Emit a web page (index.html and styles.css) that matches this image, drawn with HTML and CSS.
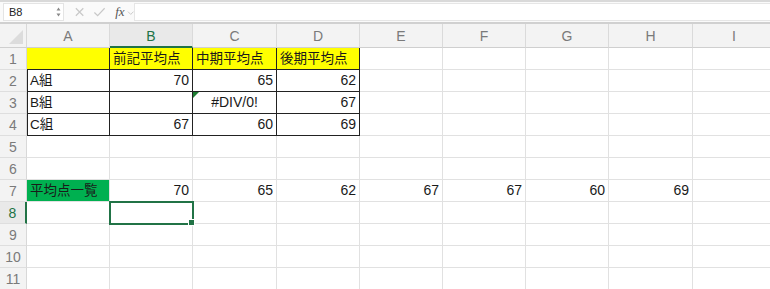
FILE: index.html
```html
<!DOCTYPE html>
<html lang="ja">
<head>
<meta charset="utf-8">
<link rel="stylesheet" href="styles.css">
</head>
<body>
<div class="toolbar">
  <div class="namebox"><span class="ref">B8</span><span class="spin"><svg width="5" height="10" viewBox="0 0 5 10"><path d="M2.5 0.5 L4.5 3.5 L0.5 3.5 Z M2.5 9.5 L4.5 6.5 L0.5 6.5 Z" fill="#8a8a8a"/></svg></span></div>
  <div class="fbtns">
    <svg class="ic" width="12" height="12" viewBox="0 0 12 12"><path d="M2 2 L10 10 M10 2 L2 10" stroke="#c8c8c8" stroke-width="1.3" fill="none"/></svg>
    <svg class="ic" width="14" height="12" viewBox="0 0 14 12"><path d="M1.5 6.5 L5 10 L12.5 2" stroke="#c8c8c8" stroke-width="1.3" fill="none"/></svg>
    <span class="fx">fx</span>
    <svg class="chev" width="8" height="6" viewBox="0 0 8 6"><path d="M1 1.5 L4 4.5 L7 1.5" stroke="#c8c8c8" stroke-width="1" fill="none"/></svg>
  </div>
  <div class="formula"></div>
</div>
<div class="sheet">
  <div class="corner"><span class="tri"></span></div>
  <div class="ch">A</div><div class="ch sel">B</div><div class="ch">C</div><div class="ch">D</div><div class="ch">E</div><div class="ch">F</div><div class="ch">G</div><div class="ch">H</div><div class="ch">I</div>

  <div class="rh">1</div>
  <div class="c y bk-r bk-b"></div><div class="c y bk-r bk-b">前記平均点</div><div class="c y bk-r bk-b">中期平均点</div><div class="c y bk-r bk-b">後期平均点</div><div class="c"></div><div class="c"></div><div class="c"></div><div class="c"></div><div class="c"></div>

  <div class="rh">2</div>
  <div class="c bk-l bk-r bk-b">A組</div><div class="c n bk-r bk-b">70</div><div class="c n bk-r bk-b">65</div><div class="c n bk-r bk-b">62</div><div class="c"></div><div class="c"></div><div class="c"></div><div class="c"></div><div class="c"></div>

  <div class="rh">3</div>
  <div class="c bk-l bk-r bk-b">B組</div><div class="c n bk-r bk-b"></div><div class="c ctr bk-r bk-b err">#DIV/0!</div><div class="c n bk-r bk-b">67</div><div class="c"></div><div class="c"></div><div class="c"></div><div class="c"></div><div class="c"></div>

  <div class="rh">4</div>
  <div class="c bk-l bk-r bk-b">C組</div><div class="c n bk-r bk-b">67</div><div class="c n bk-r bk-b">60</div><div class="c n bk-r bk-b">69</div><div class="c"></div><div class="c"></div><div class="c"></div><div class="c"></div><div class="c"></div>

  <div class="rh">5</div>
  <div class="c"></div><div class="c"></div><div class="c"></div><div class="c"></div><div class="c"></div><div class="c"></div><div class="c"></div><div class="c"></div><div class="c"></div>

  <div class="rh">6</div>
  <div class="c"></div><div class="c"></div><div class="c"></div><div class="c"></div><div class="c"></div><div class="c"></div><div class="c"></div><div class="c"></div><div class="c"></div>

  <div class="rh">7</div>
  <div class="c g">平均点一覧</div><div class="c n">70</div><div class="c n">65</div><div class="c n">62</div><div class="c n">67</div><div class="c n">67</div><div class="c n">60</div><div class="c n">69</div><div class="c"></div>

  <div class="rh sel">8</div>
  <div class="c"></div><div class="c active"></div><div class="c"></div><div class="c"></div><div class="c"></div><div class="c"></div><div class="c"></div><div class="c"></div><div class="c"></div>

  <div class="rh">9</div>
  <div class="c"></div><div class="c"></div><div class="c"></div><div class="c"></div><div class="c"></div><div class="c"></div><div class="c"></div><div class="c"></div><div class="c"></div>

  <div class="rh">10</div>
  <div class="c"></div><div class="c"></div><div class="c"></div><div class="c"></div><div class="c"></div><div class="c"></div><div class="c"></div><div class="c"></div><div class="c"></div>

  <div class="rh">11</div>
  <div class="c"></div><div class="c"></div><div class="c"></div><div class="c"></div><div class="c"></div><div class="c"></div><div class="c"></div><div class="c"></div><div class="c"></div>
</div>
</body>
</html>
```
FILE: styles.css
```css
* { box-sizing: border-box; }
html, body { margin: 0; padding: 0; background: #fff; overflow: hidden; }
body { font-family: "Liberation Sans", "Noto Sans CJK JP", sans-serif; color: #1a1a1a; width: 770px; height: 289px; }

.toolbar {
  height: 24px;
  display: flex;
  align-items: center;
  background: #fafafa;
  border-top: 2px solid #d9d9d9;
  border-bottom: 2px solid #d0d0d0;
  padding: 0 0 0 3px;
}
.namebox {
  width: 61px;
  height: 18px;
  background: #fff;
  border: 1px solid #e4e4e4;
  display: flex;
  align-items: center;
  justify-content: space-between;
  padding: 0 2px 0 5px;
  font-size: 11px;
  color: #222;
}
.spin { display: flex; align-items: center; }
.fbtns {
  width: 70px;
  display: flex;
  align-items: center;
  padding-left: 10px;
  gap: 8px;
}
.fx {
  font-family: "Liberation Serif", serif;
  font-style: italic;
  font-size: 13px;
  color: #555;
  margin-left: 1px;
}
.chev { margin-left: -6px; margin-top: 2px; }
.formula {
  flex: 1;
  height: 18px;
  background: #fff;
  border: 1px solid #e6e6e6;
  border-right: none;
}

.sheet {
  display: grid;
  grid-template-columns: 27px 83px 83px 84px 83px 83px 83px 83px 84px 83px;
  grid-template-rows: 24px repeat(11, 22px);
}
.corner {
  background: #f3f3f3;
  border-right: 1px solid #d8d8d8;
  border-bottom: 1px solid #cfcfcf;
  position: relative;
}
.corner .tri {
  position: absolute;
  right: 3px;
  bottom: 3px;
  width: 0; height: 0;
  border-left: 14px solid transparent;
  border-bottom: 14px solid #dcdcdc;
}
.ch {
  background: #f3f3f3;
  border-right: 1px solid #dadada;
  border-bottom: 1px solid #cfcfcf;
  display: flex;
  align-items: center;
  justify-content: center;
  font-size: 14px;
  color: #7a7a7a;
  padding-top: 1px;
}
.ch.sel {
  background: #e9e9e9;
  color: #217346;
  border-bottom: 2px solid #217346;
  padding-top: 2px;
}
.rh {
  background: #f3f3f3;
  border-right: 1px solid #d8d8d8;
  border-bottom: 1px solid #dedede;
  display: flex;
  align-items: center;
  justify-content: center;
  font-size: 14px;
  color: #7a7a7a;
}
.rh.sel {
  background: #e9e9e9;
  color: #217346;
  border-right: 2px solid #217346;
}
.c {
  border-right: 1px solid #e1e1e1;
  border-bottom: 1px solid #e1e1e1;
  font-size: 13.5px;
  line-height: 21px;
  padding: 0 3px;
  white-space: nowrap;
  overflow: visible;
  position: relative;
}
.c.n { text-align: right; font-size: 14px; }
.c.ctr { text-align: center; font-size: 14px; }
.c.y { background: #ffff00; }
.c.g { background: #00b050; }
.bk-r { border-right-color: #222; }
.bk-b { border-bottom-color: #222; }
.bk-l { box-shadow: inset 1px 0 #222; }
.err::before {
  content: "";
  position: absolute;
  left: 0; top: 0;
  width: 0; height: 0;
  border-top: 6px solid #1e7d32;
  border-right: 6px solid transparent;
}
.active {
  outline: 2px solid #217346;
  outline-offset: -1px;
  z-index: 2;
}
.active::after {
  content: "";
  position: absolute;
  right: -3px;
  bottom: -3px;
  width: 5px;
  height: 5px;
  background: #217346;
  border: 1px solid #fff;
}
```
